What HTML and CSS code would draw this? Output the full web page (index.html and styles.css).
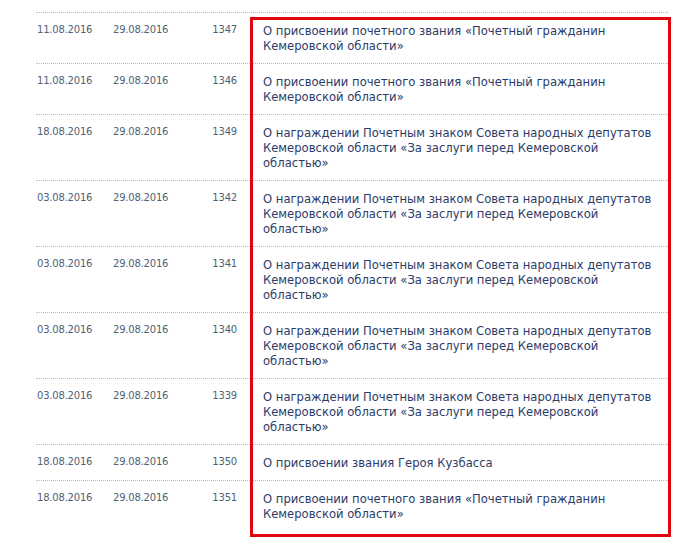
FILE: index.html
```html
<!DOCTYPE html>
<html lang="ru">
<head>
<meta charset="utf-8">
<title>Документы</title>
<link rel="stylesheet" href="styles.css">
</head>
<body>
<div class="page">
  <div class="list">
    <div class="head"></div>
    <div class="row"><span class="d">11.08.2016</span><span class="d">29.08.2016</span><span class="n">1347</span><span class="t">О присвоении почетного звания «Почетный гражданин Кемеровской области»</span></div>
    <div class="row"><span class="d">11.08.2016</span><span class="d">29.08.2016</span><span class="n">1346</span><span class="t">О присвоении почетного звания «Почетный гражданин Кемеровской области»</span></div>
    <div class="row"><span class="d">18.08.2016</span><span class="d">29.08.2016</span><span class="n">1349</span><span class="t">О награждении Почетным знаком Совета народных депутатов Кемеровской области «За заслуги перед Кемеровской<br>областью»</span></div>
    <div class="row"><span class="d">03.08.2016</span><span class="d">29.08.2016</span><span class="n">1342</span><span class="t">О награждении Почетным знаком Совета народных депутатов Кемеровской области «За заслуги перед Кемеровской<br>областью»</span></div>
    <div class="row"><span class="d">03.08.2016</span><span class="d">29.08.2016</span><span class="n">1341</span><span class="t">О награждении Почетным знаком Совета народных депутатов Кемеровской области «За заслуги перед Кемеровской<br>областью»</span></div>
    <div class="row"><span class="d">03.08.2016</span><span class="d">29.08.2016</span><span class="n">1340</span><span class="t">О награждении Почетным знаком Совета народных депутатов Кемеровской области «За заслуги перед Кемеровской<br>областью»</span></div>
    <div class="row"><span class="d">03.08.2016</span><span class="d">29.08.2016</span><span class="n">1339</span><span class="t">О награждении Почетным знаком Совета народных депутатов Кемеровской области «За заслуги перед Кемеровской<br>областью»</span></div>
    <div class="row"><span class="d">18.08.2016</span><span class="d">29.08.2016</span><span class="n">1350</span><span class="t">О присвоении звания Героя Кузбасса</span></div>
    <div class="row last"><span class="d">18.08.2016</span><span class="d">29.08.2016</span><span class="n">1351</span><span class="t">О присвоении почетного звания «Почетный гражданин Кемеровской области»</span></div>
  </div>
  <div class="highlight"></div>
</div>
</body>
</html>
```
FILE: styles.css
```css
html, body {
  margin: 0;
  padding: 0;
  background: #fff;
}
body {
  font-family: "DejaVu Sans", Verdana, sans-serif;
}
.page {
  position: relative;
  width: 700px;
  height: 546px;
  overflow: hidden;
}
.list {
  margin-left: 36px;
  width: 632px;
}
.head {
  height: 12px;
  border-bottom: 1px dotted #b3bac4;
}
.row {
  display: grid;
  grid-template-columns: 76px 70px 54px 426px;
  border-bottom: 1px dotted #b3bac4;
  padding: 0 0 9px 1px;
}
.row.last {
  border-bottom: none;
}
.d, .n {
  font-size: 10px;
  line-height: 15px;
  color: #4e6275;
  padding-top: 9px;
  letter-spacing: -0.2px;
}
.n {
  text-align: right;
}
.t {
  font-size: 11.6px;
  line-height: 15px;
  color: #2c3b69;
  padding-top: 11px;
  margin-left: 26px;
}
.highlight {
  position: absolute;
  left: 250px;
  top: 17px;
  width: 421px;
  height: 520px;
  box-sizing: border-box;
  border: 3px solid #e0050f;
}
```
